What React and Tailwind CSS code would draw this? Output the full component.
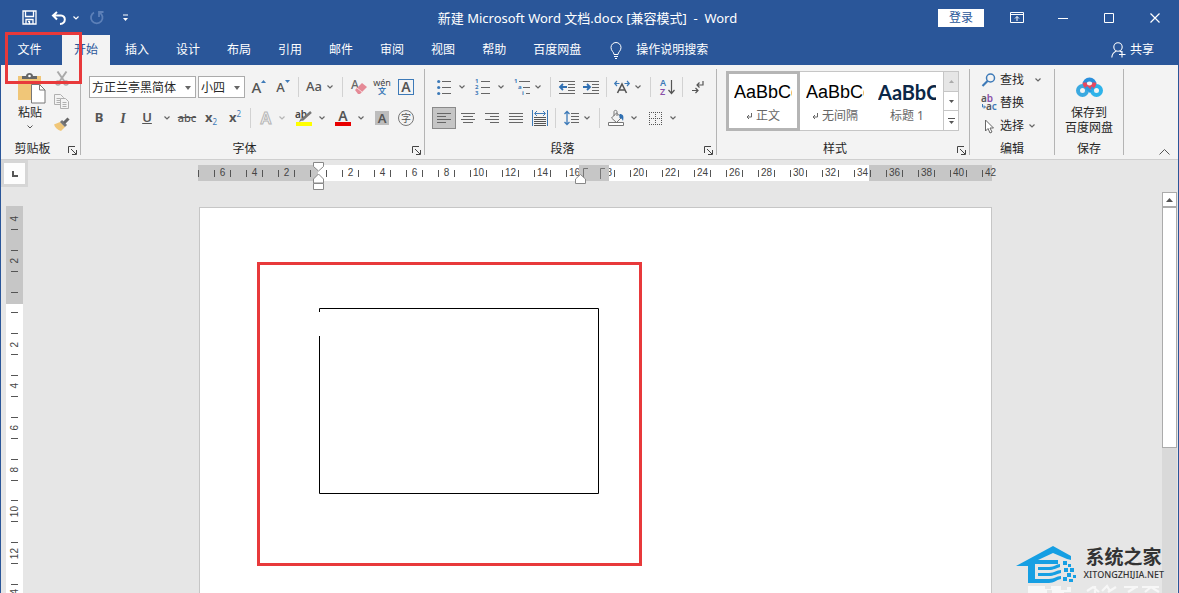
import React, { useState } from 'react';

const TABS = ['开始', '插入', '设计', '布局', '引用', '邮件', '审阅', '视图', '帮助', '百度网盘'];

const STYLES = [
    { name: '正文', mark: true, sample: "text-[18px] font-['Liberation_Sans',sans-serif] text-black" },
    { name: '无间隔', mark: true, sample: "text-[18px] font-['Liberation_Sans',sans-serif] text-black" },
    { name: '标题 1', mark: false, sample: "text-[20px] font-bold font-['Lato',sans-serif] text-[#0b2747]" },
];

// El cero queda vacío porque ahí van los marcadores de sangría
const H_RULER = ['', 6, '', 4, '', 2, '', '', '', ...Array.from({ length: 41 }, (_, i) => (i % 2 === 0 ? i + 2 : ''))];
const V_RULER = [4, '', 2, '', '', '', 2, '', 4, '', 6, '', 8, '', 10, '', 12, '', 14];

const Chevron = ({ className = 'w-3', color = '#666' }) => (
    <button type="button" aria-label="更多选项" className={`h-[22px] shrink-0 flex items-center justify-center ${className}`}>
        <svg width="6" height="4" viewBox="0 0 6 4" fill="none" stroke={color} strokeWidth="1.2"><path d="M.5.5 3 3 5.5.5" /></svg>
    </button>
);

const Tool = ({ label, active, className = 'w-6', children }) => (
    <button
        type="button"
        aria-label={label}
        className={`h-[22px] shrink-0 flex items-center justify-center ${className} ${active ? 'bg-[#c5c5c5] border border-[#8a8a8a]' : 'hover:bg-[#d5d5d5]'}`}
    >
        {children}
    </button>
);

const Sep = ({ className = 'mx-[3px]' }) => <span className={`w-px h-5 shrink-0 bg-[#d2d2d2] ${className}`} />;

const Svg = ({ w = 18, h = 18, className = '', children, ...rest }) => (
    <svg width={w} height={h} viewBox={`0 0 ${w} ${h}`} fill="none" className={`overflow-visible shrink-0 ${className}`} {...rest}>{children}</svg>
);

const Group = ({ title, launcher, className, children }) => (
    <section className={`h-full shrink-0 flex flex-col border-r border-[#b4b4b4] ${className}`}>
        <div className="flex-1 min-h-0">{children}</div>
        <div className="h-[14px] flex items-end">
            <h2 className="flex-1 text-center text-xs leading-3">{title}</h2>
            {launcher && (
                <button type="button" aria-label={`${title}设置`} className="w-4 h-[14px] flex items-end justify-center">
                    <Svg w={9} h={9} stroke="#444">
                        <path d="M.5 7V.5H7M3 3l5 5M8.500 4v4.500H4" />
                    </Svg>
                </button>
            )}
        </div>
    </section>
);

const Lines = ({ rows }) => (
    <Svg w={14} h={12} stroke="#666">
        {rows.map(([a, b], i) => <path key={i} d={`M${a} ${i * 3 + 1.5}H${b}`} />)}
    </Svg>
);

const Combo = ({ label, value, className }) => (
    <div className={`grid h-[22px] shrink-0 bg-white border border-[#ababab] ${className}`}>
        <select aria-label={label} defaultValue={value} className="col-start-1 row-start-1 appearance-none bg-transparent pl-[2px] pt-px text-xs leading-5 text-[#262626] outline-none">
            <option>{value}</option>
        </select>
        <svg className="col-start-1 row-start-1 justify-self-end self-center mr-1 pointer-events-none" width="6" height="4" viewBox="0 0 6 4"><path d="M0 0h6L3 4z" fill="#666" /></svg>
    </div>
);

function TitleBar() {
    return (
        <header className="h-[35px] shrink-0 grid grid-cols-[1fr_auto_1fr] items-center text-white">
            <div className="flex items-center pl-[19px]">
                <button type="button" aria-label="保存" className="w-[18px] flex justify-center">
                    <Svg w={15} h={15} stroke="#fff" strokeWidth="1.3">
                        <path d="M1 1h13v13H1zM3.500 1v5.500h8V1M4 14V9.500h7V14" /><path d="M6 11.500h1.500V14" />
                    </Svg>
                </button>
                <button type="button" aria-label="撤消" className="ml-3 w-[18px] flex justify-center">
                    <Svg w={16} h={14} stroke="#fff" strokeWidth="2">
                        <path d="M6 1 2 4.500 6 8.500M2.500 4.500H10c5 0 5.500 8-1 8.500" />
                    </Svg>
                </button>
                <Chevron className="w-4" color="#fff" />
                <button type="button" aria-label="重复" className="ml-[3px] w-[18px] flex justify-center">
                    <Svg w={15} h={15} stroke="#5d80b8" strokeWidth="1.8">
                        <path d="M5 2.500a5.800 5.800 0 1 0 5.500 0M10 7V2h4.500" />
                    </Svg>
                </button>
                <button type="button" aria-label="自定义快速访问工具栏" className="ml-3 w-4 flex justify-center">
                    <Svg w={7} h={8}><path d="M1 1h5" stroke="#fff" /><path d="M1 4h5L3.500 7z" fill="#fff" /></Svg>
                </button>
            </div>
            <h1 className="text-[13px] leading-4 whitespace-pre pr-1">新建 Microsoft Word 文档.docx [兼容模式]  -  Word</h1>
            <div className="flex items-center justify-end h-full">
                <button type="button" className="w-[46px] h-[18px] mr-[10px] bg-white text-[#2a5699] text-xs leading-[18px]">登录</button>
                <button type="button" aria-label="功能区显示选项" className="w-[46px] h-full flex items-center justify-center">
                    <Svg w={14} h={11} stroke="#fff"><path d="M.5.5h13v10H.5zM.5 2.500h13M7 9V4.500M5 6.500l2-2 2 2" /></Svg>
                </button>
                <button type="button" aria-label="最小化" className="w-[46px] h-full flex items-center justify-center">
                    <Svg w={10} h={10} stroke="#fff"><path d="M0 5.500h10" /></Svg>
                </button>
                <button type="button" aria-label="最大化" className="w-[46px] h-full flex items-center justify-center">
                    <Svg w={10} h={10} stroke="#fff"><path d="M.5.5h9v9h-9z" /></Svg>
                </button>
                <button type="button" aria-label="关闭" className="w-[46px] h-full flex items-center justify-center">
                    <Svg w={10} h={10} stroke="#fff" strokeWidth="1.2"><path d="m.5.5 9 9M9.500.5l-9 9" /></Svg>
                </button>
            </div>
        </header>
    );
}

function TabBar({ active, onChange }) {
    return (
        <nav className="h-[30px] shrink-0 flex items-stretch gap-[3px] text-white text-xs">
            <button type="button" className="w-[58px] pr-px text-center">文件</button>
            {TABS.map(tab => (
                <button
                    key={tab}
                    type="button"
                    onClick={() => onChange(tab)}
                    className={`px-3 whitespace-nowrap ${active === tab ? 'bg-[#f3f3f3] text-[#2a5699]' : ''}`}
                >
                    {tab}
                </button>
            ))}
            <label className="flex items-center pl-[14px]">
                <Svg w={12} h={17} stroke="#fff">
                    <path d="M4 12.500c0-2.500-3-3.500-3-7a5 5 0 0 1 10 0c0 3.500-3 4.500-3 7zM4 14.500h4M5 16.500h2" />
                </Svg>
                <input type="text" aria-label="操作说明搜索" placeholder="操作说明搜索" className="ml-[14px] w-24 bg-transparent outline-none placeholder:text-white placeholder:opacity-100" />
            </label>
            <button type="button" className="ml-auto mr-6 flex items-center gap-1">
                <Svg w={15} h={16} stroke="#fff" strokeWidth="1.1">
                    <circle cx="7" cy="5" r="4.200" /><path d="M.8 15.500C1 12 3 10 5.500 9M8.500 9l2 1M11 9v6.500M8 12.500h6.500" />
                </Svg>
                共享
            </button>
        </nav>
    );
}

function ClipboardGroup() {
    return (
        <Group title="剪贴板" launcher className="w-[80px]">
            <div className="flex pl-[7px]">
                <button type="button" className="w-11 pt-1 flex flex-col items-center text-xs">
                    <Svg w={30} h={31} className="ml-1">
                        <path d="M1 3h23v24H1z" fill="#f0c678" />
                        <path d="M5 6V3h4c0-4 7-4 7 0h4v3z" fill="#666" /><circle cx="12.500" cy="3" r="1.300" fill="#fff" />
                        <path d="M14.500 11.500h8l5.500 5.500v13H14.500z" fill="#fff" stroke="#777" /><path d="M22.500 11.500V17H28" stroke="#777" />
                    </Svg>
                    <span className="leading-[18px]">粘贴</span>
                    <svg className="mt-[3px]" width="6" height="4" viewBox="0 0 6 4" fill="none" stroke="#555"><path d="M.5.5 3 3 5.500.5" /></svg>
                </button>
                <div className="w-5 flex flex-col gap-[5px]">
                    <button type="button" aria-label="剪切" className="h-[18px] flex items-center justify-center">
                        <Svg w={14} h={15} stroke="#aaa" strokeWidth="1.500">
                            <path d="m2.500.5 7 10M11.500.5l-7 10" strokeWidth="2" /><circle cx="3" cy="12" r="2" /><circle cx="11" cy="12" r="2" />
                        </Svg>
                    </button>
                    <button type="button" aria-label="复制" className="h-[18px] flex items-center justify-center">
                        <Svg w={16} h={15} stroke="#b0b0b0">
                            <path d="M.5.5h6l3 3v7h-9zM2.500 4.500h4M2.500 6.500h4M2.500 8.500h4" fill="#f3f3f3" />
                            <path d="M6.500 4.500h5l3 3v7h-8zM8.500 8.500h4M8.500 10.500h4M8.500 12.500h4" fill="#f3f3f3" />
                        </Svg>
                    </button>
                    <button type="button" aria-label="格式刷" className="h-[18px] flex items-center justify-center">
                        <Svg w={16} h={14}>
                            <path d="M0 7.500 6 5l5 5-4 4C3.500 13 1 10.500 0 7.500z" fill="#f0c678" />
                            <path d="m7 4 5 5" stroke="#777" strokeWidth="3" /><path d="m10 6 4.500-4.500" stroke="#666" strokeWidth="3" />
                        </Svg>
                    </button>
                </div>
            </div>
        </Group>
    );
}

function FontGroup() {
    return (
        <Group title="字体" launcher className="w-[344px]">
            <div className="flex flex-col gap-[9px] pt-[7px] text-[#555]">
                <div className="flex items-center pl-2">
                    <Combo label="字体" value="方正兰亭黑简体" className="w-[107px]" />
                    <Combo label="字号" value="小四" className="ml-[2px] w-[47px]" />
                    <Tool label="增大字号" className="ml-[2px] w-6">
                        <span className="text-[15px] font-medium leading-none">A</span><Svg w={5} h={14}><path d="M0 3h5L2.500 0z" fill="#3d7ab8" /></Svg>
                    </Tool>
                    <Tool label="减小字号">
                        <span className="text-[13px] font-medium leading-none">A</span><Svg w={5} h={14}><path d="M0 0h5L2.500 3z" fill="#3d7ab8" /></Svg>
                    </Tool>
                    <Sep />
                    <Tool label="更改大小写"><span className="text-[13px] font-medium">Aa</span></Tool>
                    <Chevron className="w-2" />
                    <Sep className="ml-2 mr-[3px]" />
                    <Tool label="清除所有格式">
                        <Svg w={15} h={17}>
                            <text x="0" y="10" fontSize="12" fontWeight="500" fill="#666">A</text>
                            <path d="m4 11 7-7 5 4-7 7H7z" fill="#e58a96" /><path d="m6 9 5 4" stroke="#f8d5d9" />
                        </Svg>
                    </Tool>
                    <Tool label="拼音指南">
                        <Svg w={18} h={18}>
                            <text x="9" y="8" fontSize="9" textAnchor="middle" fill="#444">wén</text>
                            <text x="9" y="16" fontSize="8" fontWeight="700" textAnchor="middle" fill="#3d7ab8">文</text>
                        </Svg>
                    </Tool>
                    <Tool label="字符边框"><span className="w-4 h-4 border border-[#3d7ab8] text-sm leading-[14px] font-semibold">A</span></Tool>
                </div>
                <div className="flex items-center pl-[6px]">
                    <Tool label="加粗"><b className="text-[13px]">B</b></Tool>
                    <Tool label="倾斜"><i className="text-[14px] font-semibold font-['Liberation_Serif',serif]">I</i></Tool>
                    <Tool label="下划线"><u className="text-[13px] font-semibold">U</u></Tool>
                    <Chevron className="w-4" />
                    <Tool label="删除线"><s className="text-[11px] font-medium">abc</s></Tool>
                    <Tool label="下标"><b className="text-[13px]">x</b><span className="text-[8px] leading-none pt-2 text-[#3d7ab8]">2</span></Tool>
                    <Tool label="上标"><b className="text-[13px]">x</b><span className="text-[8px] leading-none pb-2 text-[#3d7ab8]">2</span></Tool>
                    <Sep />
                    <Tool label="文本效果">
                        <Svg w={14} h={16}><text x="7" y="14" fontSize="16" fontWeight="600" textAnchor="middle" fill="#f8f8f8" stroke="#b5b5b5">A</text></Svg>
                    </Tool>
                    <Chevron className="w-2" color="#b5b5b5" />
                    <Tool label="突出显示" className="ml-[6px] w-6">
                        <Svg w={18} h={18}>
                            <text x="0" y="9" fontSize="10" fontWeight="600" fill="#444">ab</text>
                            <path d="m7 11 9-8" stroke="#777" strokeWidth="2.500" /><path d="m4 13 2-4 2 2z" fill="#777" /><path d="M1 13h16v4H1z" fill="#ff0" />
                        </Svg>
                    </Tool>
                    <Chevron />
                    <Tool label="字体颜色" className="ml-[3px] w-6">
                        <Svg w={16} h={18}>
                            <text x="8" y="12" fontSize="14" fontWeight="600" textAnchor="middle" fill="#555">A</text><path d="M0 13h16v4H0z" fill="#e80000" />
                        </Svg>
                    </Tool>
                    <Chevron />
                    <Tool label="字符底纹" className="ml-[3px] w-6"><span className="w-[14px] h-[14px] bg-[#bdbdbd] text-[13px] leading-[14px] font-semibold">A</span></Tool>
                    <Tool label="带圈字符"><span className="w-4 h-4 rounded-full border border-[#777] text-[10px] leading-[14px]">字</span></Tool>
                </div>
            </div>
        </Group>
    );
}

function ParagraphGroup() {
    return (
        <Group title="段落" launcher className="w-[292px]">
            <div className="flex flex-col gap-[9px] pt-[7px] pl-[7px]">
                <div className="flex items-center">
                    <Tool label="项目符号">
                        <Svg w={14} h={16}>
                            <path d="M5 2.500h9M5 8.500h9M5 14.500h9" stroke="#666" />
                            <g fill="#3d7ab8"><circle cx="1.700" cy="2.500" r="1.600" /><circle cx="1.700" cy="8.500" r="1.600" /><circle cx="1.700" cy="14.500" r="1.600" /></g>
                        </Svg>
                    </Tool>
                    <Chevron />
                    <Tool label="编号" className="ml-[3px] w-6">
                        <Svg w={16} h={18}>
                            <path d="M6 3.500h9M6 9.500h9M6 15.500h9" stroke="#666" />
                            <g fontSize="6" fontWeight="700" fill="#3d7ab8"><text x="0" y="5">1</text><text x="0" y="11">2</text><text x="0" y="17">3</text></g>
                        </Svg>
                    </Tool>
                    <Chevron />
                    <Tool label="多级列表" className="ml-[3px] w-6">
                        <Svg w={18} h={18}>
                            <path d="M6 3.500h11M10 9.500h7M13 15.500h4" stroke="#666" />
                            <g fontSize="6" fontWeight="700" fill="#3d7ab8"><text x="1" y="5">1</text><text x="5" y="11">a</text><text x="9" y="17">i</text></g>
                        </Svg>
                    </Tool>
                    <Chevron className="w-2" />
                    <Sep className="ml-2 mr-1" />
                    <Tool label="减少缩进量">
                        <Svg w={16} h={14}>
                            <path d="M0 1.500h16M9 4.500h7M9 7.500h7M9 10.500h7M0 13.500h16" stroke="#666" /><path d="M1 7h7M4 4 1 7l3 3" stroke="#2f6fb2" strokeWidth="1.800" />
                        </Svg>
                    </Tool>
                    <Tool label="增加缩进量">
                        <Svg w={16} h={14}>
                            <path d="M0 1.500h16M9 4.500h7M9 7.500h7M9 10.500h7M0 13.500h16" stroke="#666" /><path d="M0 7h7M4 4l3 3-3 3" stroke="#2f6fb2" strokeWidth="1.800" />
                        </Svg>
                    </Tool>
                    <Sep />
                    <Tool label="中文版式">
                        <Svg w={16} h={14}>
                            <path d="M3.500 13 8 4l4.500 9M5 10h6" stroke="#555" strokeWidth="1.600" />
                            <path d="M5.500 3.500H1M3 1 .7 3.500 3 6M10.500 3.500H15M13 1l2.300 2.500L13 6" stroke="#3d7ab8" strokeWidth="1.200" />
                        </Svg>
                    </Tool>
                    <Chevron className="w-2" />
                    <Sep className="ml-2 mr-1" />
                    <Tool label="排序">
                        <Svg w={15} h={18}>
                            <text x="0" y="8" fontSize="9" fontWeight="600" fill="#3d7ab8">A</text><text x="0" y="17" fontSize="9" fontWeight="600" fill="#8a4fa8">Z</text>
                            <path d="M11.500 2v13M8.500 12l3 3.500 3-3.500" stroke="#555" strokeWidth="1.200" />
                        </Svg>
                    </Tool>
                    <Sep />
                    <Tool label="显示编辑标记">
                        <Svg w={12} h={14} stroke="#555" strokeWidth="1.200">
                            <path d="M11 1v4H5M7.500 2.500 5 5l2.500 2.500M0 10.500h6M3.500 8 6 10.500 3.500 13" />
                        </Svg>
                    </Tool>
                </div>
                <div className="flex items-center">
                    <Tool label="左对齐" active><Lines rows={[[0, 14], [0, 9], [0, 14], [0, 9]]} /></Tool>
                    <Tool label="居中"><Lines rows={[[0, 14], [2, 12], [0, 14], [2, 12]]} /></Tool>
                    <Tool label="右对齐"><Lines rows={[[0, 14], [5, 14], [0, 14], [5, 14]]} /></Tool>
                    <Tool label="两端对齐"><Lines rows={[[0, 14], [0, 14], [0, 14], [0, 14]]} /></Tool>
                    <Tool label="分散对齐">
                        <Svg w={16} h={16}>
                            <path d="M.5 0v16M15.500 0v16M3 3.500h10M5 1 2.500 3.500 5 6M11 1l2.500 2.500L11 6" stroke="#3d7ab8" /><path d="M2 7.500h12M2 9.500h12M2 11.500h12M2 13.500h12M2 15.500h12" stroke="#555" />
                        </Svg>
                    </Tool>
                    <Sep />
                    <Tool label="行和段落间距">
                        <Svg w={15} h={16}>
                            <path d="M7 3.500h8M7 6.500h8M7 9.500h8M7 12.500h8" stroke="#666" /><path d="M3 1v14M.5 4 3 1.500 5.500 4M.5 12 3 14.500 5.500 12" stroke="#3d7ab8" strokeWidth="1.300" />
                        </Svg>
                    </Tool>
                    <Chevron className="w-2" />
                    <Sep className="ml-2 mr-1" />
                    <Tool label="底纹">
                        <Svg w={17} h={16}>
                            <path d="m3.500 8 5-5 5 4.500-5 5zM6 6V1.500c0-1.500 3-1.500 3 0V6" stroke="#777" /><path d="M11.500 4c4 0 4.500 2.500 3.500 7-1-2-1.500-3-3.500-3z" fill="#2f6fb2" />
                            <path d="M.5 12.500h15v3H.5z" fill="#fff" stroke="#777" />
                        </Svg>
                    </Tool>
                    <Chevron />
                    <Tool label="边框" className="ml-[3px] w-6">
                        <Svg w={13} h={13} stroke="#555"><path d="M0 .5h13M0 6.500h13M0 12.500h13M.5 2v10M6.500 2v10M12.500 2v10" strokeDasharray="1 1" /></Svg>
                    </Tool>
                    <Chevron />
                </div>
            </div>
        </Group>
    );
}

function StylesGroup() {
    return (
        <Group title="样式" launcher className="w-[253px]">
            <div className="flex mt-[2px] ml-[9px] w-[233px] h-[60px] border border-[#c6c6c6] bg-white">
                {STYLES.map((s, i) => (
                    <button key={s.name} type="button" className={`w-[72px] flex flex-col items-center overflow-hidden px-[3px] ${i === 0 ? 'outline-3 -outline-offset-2 outline-[#b5b5b5]' : ''}`}>
                        <span className={`mt-1 h-8 w-[58px] overflow-hidden whitespace-nowrap text-left leading-8 ${s.sample}`}>AaBbCc</span>
                        <span className="flex items-center gap-1 text-xs leading-4 text-[#666] whitespace-nowrap">
                            {s.mark && <Svg w={6} h={6} stroke="#666"><path d="M5.500 0v4H1M3 2 1 4l2 2" /></Svg>}
                            {s.name}
                        </span>
                    </button>
                ))}
                <div className="flex-1 flex flex-col border-l border-[#c6c6c6] divide-y divide-[#c6c6c6]">
                    <button type="button" aria-label="上一行" className="flex-1 flex items-center justify-center bg-[#e6e6e6]"><Svg w={5} h={3}><path d="M0 3h5L2.500 0z" fill="#aaa" /></Svg></button>
                    <button type="button" aria-label="下一行" className="flex-1 flex items-center justify-center"><Svg w={5} h={3}><path d="M0 0h5L2.500 3z" fill="#555" /></Svg></button>
                    <button type="button" aria-label="其他" className="flex-1 flex items-center justify-center"><Svg w={7} h={6}><path d="M0 .5h7" stroke="#555" /><path d="M1 3h5L3.500 6z" fill="#555" /></Svg></button>
                </div>
            </div>
        </Group>
    );
}

function EditingGroup() {
    return (
        <Group title="编辑" className="w-[85px]">
            <div className="flex flex-col gap-[5px] pt-[2px] pl-3 text-xs">
                <div className="flex items-center h-[18px]">
                    <button type="button" className="flex items-center gap-1">
                        <Svg w={14} h={14} stroke="#3d7ab8"><circle cx="8.500" cy="5" r="4" strokeWidth="1.500" /><path d="m5.500 8-5 5" strokeWidth="2.200" /></Svg>
                        查找
                    </button>
                    <Chevron className="ml-2 w-3" />
                </div>
                <button type="button" className="flex items-center gap-1 h-[18px]">
                    <Svg w={14} h={18} fontSize="10" fontWeight="600">
                        <text x="-1" y="8" fill="#555">a<tspan fill="#8a4fa8">b</tspan></text>
                        <text x="4" y="16" fill="#555">a<tspan fill="#3d7ab8">c</tspan></text>
                        <path d="M.5 10v3H3M2 11.500 3.500 13 2 14.500" stroke="#3d7ab8" />
                    </Svg>
                    替换
                </button>
                <div className="flex items-center h-[18px]">
                    <button type="button" className="flex items-center gap-1">
                        <Svg w={14} h={15} stroke="#666"><path d="M3.500 1v11l2.500-2.500 2 4.500 2-1-2-4h3.500z" fill="#fff" /></Svg>
                        选择
                    </button>
                    <Chevron className="ml-[2px] w-3" />
                </div>
            </div>
        </Group>
    );
}

function SaveGroup() {
    return (
        <Group title="保存" className="w-[69px]">
            <button type="button" className="w-full pt-[6px] flex flex-col items-center text-xs leading-[15px]">
                <Svg w={27} h={23} strokeWidth="4" className="mb-[7px]">
                    <path d="M8.500 9.500a5 5 0 1 1 10 0" stroke="#2a8fdc" />
                    <circle cx="6.500" cy="15.500" r="4.500" stroke="#3aa9e0" /><circle cx="20.500" cy="15.500" r="4.500" stroke="#2eb3ea" />
                    <path d="M8.500 7.500c.5 3.500 2.500 5 5 5s4.500-1.500 5-5" stroke="#e8475f" />
                    <path d="m10 12 5 5M17 12.500 15.500 14" stroke="#2a9be0" strokeWidth="3" />
                </Svg>
                <span>保存到</span>
                <span>百度网盘</span>
            </button>
        </Group>
    );
}

function HorizontalRuler() {
    return (
        <div className="relative w-[794px] h-4 mx-auto grid grid-cols-[minmax(0,1fr)] text-[10px] text-[#444] font-['Liberation_Sans',sans-serif]">
            <div className="col-start-1 row-start-1 flex">
                <span className="w-[120px] bg-[#c6c6c6]" />
                <span className="w-[551px] bg-white" />
                <span className="flex-1 bg-[#c6c6c6]" />
            </div>
            <div className="col-start-1 row-start-1 flex items-center">
                {H_RULER.map((n, i) => (
                    <span key={i} className="w-4 shrink-0 flex items-center">
                        <i className="w-px h-[7px] bg-[#555]" />
                        <span className="flex-1 min-w-0 flex justify-center leading-4">{n}</span>
                    </span>
                ))}
            </div>
            {/* columna activa */}
            <div className="absolute left-[381px] top-0 w-[30px] h-4 bg-[#c6c6c6] flex items-center justify-between px-1">
                <Svg w={5} h={11} stroke="#777"><path d="M.5 11V.5H5" /></Svg>
                <Svg w={5} h={11} stroke="#777"><path d="M.5 11V.5H5" /></Svg>
            </div>
            <svg className="absolute left-[115px] -top-[3px]" width="11" height="28" viewBox="0 0 11 28" fill="#fff" stroke="#888">
                <path d="M.5.5h10v4l-5 4.500-5-4.500zM5.500 12l5 5v4H.5v-4zM.5 21.500h10v6H.5z" />
            </svg>
            <svg className="absolute left-[377px] top-[9px]" width="11" height="10" viewBox="0 0 11 10" fill="#fff" stroke="#888">
                <path d="m5.500.5 5 4.500v4.500H.5V5z" />
            </svg>
        </div>
    );
}

function VerticalRuler() {
    return (
        <div className="mt-[19px] ml-[5px] w-[17px] h-[400px] shrink-0 grid text-[10px] text-[#444] font-['Liberation_Sans',sans-serif]">
            <div className="col-start-1 row-start-1 flex flex-col">
                <span className="h-[98px] bg-[#c6c6c6]" />
                <span className="flex-1 bg-white" />
            </div>
            <div className="col-start-1 row-start-1 flex flex-col pt-[3px]">
                {V_RULER.map((n, i) => (
                    <span key={i} className="flex-1 min-h-0 flex flex-col items-center">
                        <span className="flex-1 min-h-0 flex items-center">
                            <span className="[writing-mode:vertical-rl] rotate-180 leading-4">{n}</span>
                        </span>
                        <i className="w-[7px] h-px bg-[#555]" />
                    </span>
                ))}
            </div>
        </div>
    );
}

function Watermark() {
    return (
        <div className="absolute bottom-0 right-[14px] flex items-start gap-[6px] h-[49px]">
            <svg width="62" height="49" viewBox="0 0 62 49" fill="#169fe3">
                <path d="M0 22 37 2l18 10v4l-4-1-14-6L22 16h20v4H19v18h-7V22z" />
                <path d="M22 23h11c6 0 7-3 11-3v3c-4 1-6 3-11 3H22zM22 29h11c6 0 7-3 12-3v3c-5 1-7 3-12 3H22zM20 35h13c6 0 7-3 12-3v3c-5 1-7 4-12 4H12v-4z" />
                <path d="M47 17h4v4h-4zM52 20h3v3h-3zM48 24h4v4h-4zM54 24h4v4h-4zM51 29h4v4h-4zM57 31h3v3h-3zM47 33h4v4h-4zM53 35h4v3h-4z" />
                <path d="M12 42h17v3h6v-3h10v4h6v-3h4v5h-7v1H36v-3h-5v3H12z" fill="#f7f7f7" />
            </svg>
            <div className="flex flex-col text-[#333] whitespace-nowrap">
                <span className="mt-px pl-[2px] text-[19px] leading-6 font-bold">系统之家</span>
                <span className="text-[9px] leading-[11px] font-medium">XITONGZHIJIA.NET</span>
                <svg width="76" height="9" viewBox="0 0 76 9" className="mt-1 ml-[2px]" fill="none" stroke="#f7f7f7" strokeWidth="2.200">
                    <path d="M1 7 7 3l6 5M16 7l5-5 3 5M9 2v7M22 8l8-5M38 3h14M42 8l8-5M56 3h17M59 8l6-5 8 5" />
                </svg>
            </div>
        </div>
    );
}

export default function App() {
    const [tab, setTab] = useState('开始');

    return (
        <div className="relative h-screen overflow-hidden flex flex-col bg-[#2a5699] border-x border-[#2a5699] text-[#262626] font-['Noto_Sans','Noto_Sans_CJK_SC',sans-serif]">
            <TitleBar />
            <TabBar active={tab} onChange={setTab} />

            {/* Cinta de opciones */}
            <div className="h-[95px] shrink-0 flex py-1 bg-[#f3f3f3] border-b border-[#cfcfcf]">
                <ClipboardGroup />
                <FontGroup />
                <ParagraphGroup />
                <StylesGroup />
                <EditingGroup />
                <SaveGroup />
                <button type="button" aria-label="折叠功能区" className="ml-auto mr-2 self-end">
                    <Svg w={11} h={6} stroke="#555"><path d="m.5 5.500 5-5 5 5" /></Svg>
                </button>
            </div>

            {/* Área de trabajo */}
            <main className="flex-1 min-h-0 flex bg-[#e6e6e6]">
                <div className="w-[27px] shrink-0 flex flex-col overflow-hidden">
                    <button type="button" aria-label="制表符" className="w-[27px] h-[27px] shrink-0 bg-[#fdfdfd] border-[3px] border-[#d6d6d6] flex items-center justify-center">
                        <Svg w={6} h={6} stroke="#555" strokeWidth="2"><path d="M1 0v5h5" /></Svg>
                    </button>
                    <VerticalRuler />
                </div>

                <div className="flex-1 min-w-0 flex flex-col gap-[26px] pt-[5px] overflow-hidden">
                    <HorizontalRuler />
                    <article className="flex-1 w-[793px] mx-auto bg-white border border-b-0 border-[#c6c6c6] pt-[54px] pl-[57px]">
                        <div className="w-[385px] h-[304px] border-3 border-[#e8393b] pt-[43px] pl-[59px]">
                            <Svg w={280} h={186} stroke="#000"><path d="M.5 4V.5h279v185H.5V28" /></Svg>
                        </div>
                    </article>
                </div>

                <div className="w-[15px] mr-px shrink-0 mt-8 flex flex-col bg-[#d9d9d9]">
                    <button type="button" aria-label="向上滚动" className="h-[15px] bg-white border border-[#ababab] flex items-center justify-center">
                        <Svg w={7} h={4}><path d="M0 4h7L3.500 0z" fill="#555" /></Svg>
                    </button>
                    <div className="h-[241px] bg-white border border-[#ababab]" />
                </div>
            </main>

            <div className="absolute left-1 top-8 w-[77px] h-[52px] border-3 border-[#e8393b] pointer-events-none" />
            <Watermark />
        </div>
    );
}
